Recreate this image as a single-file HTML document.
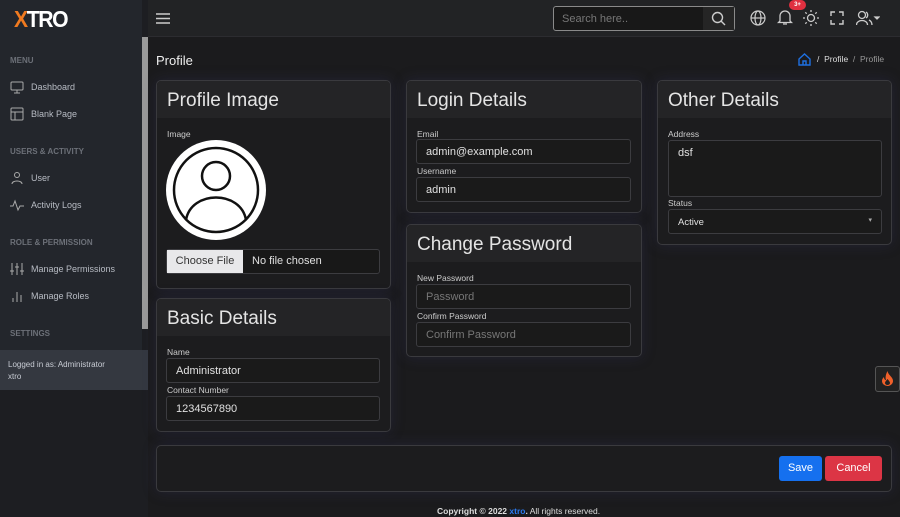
<!DOCTYPE html>
<html><head><style>
*{box-sizing:border-box;margin:0;padding:0}
body{width:900px;height:517px;overflow:hidden;background:#1b1b1d;font-family:"Liberation Sans",sans-serif;color:#ddd;position:relative}
.sb{position:absolute;left:0;top:0;width:148px;height:517px;background:#1d1e22}
.sbi{position:absolute;left:0;top:0;width:142px;height:390px;background:#23262c}
.scroll{position:absolute;left:142px;top:37px;width:6px;height:292px;background:#9a9a9a}
.logo{position:absolute;left:14px;top:6px;font-size:23px;font-weight:bold;color:#fff;letter-spacing:-1.5px;transform:scaleX(.92);transform-origin:left}
.logo b{color:#f07a20}
.sec{position:absolute;left:10px;font-size:8px;font-weight:bold;color:#6c7078}
.it{position:absolute;left:31px;font-size:9px;color:#b8bcc4}
.ic{position:absolute;left:10px;width:14px;height:14px}
.login{position:absolute;left:0;top:350px;width:148px;height:40px;background:#343840;font-size:8px;color:#c8ccd4;padding:9px 8px;line-height:12px}
.top{position:absolute;left:148px;top:0;width:752px;height:37px;background:#222325;border-bottom:1px solid #2c2c30}
.card{position:absolute;background:#1c1c1e;border:1px solid #3a3a3e;border-radius:5px;overflow:hidden;box-shadow:0 0 14px rgba(60,60,120,.25)}
.card h2{height:37px;background:#242426;font-weight:normal;font-size:19px;color:#e4e4e4;padding:9px 10px}
.lb{position:absolute;font-size:8.5px;color:#ccc}
.in{position:absolute;height:25px;border:1px solid #3c3c40;border-radius:3px;background:#1a1a1a;font-size:11px;color:#e0e0e0;padding:6px 9px}
.ph{color:#777}
.btn{position:absolute;top:456px;height:25px;border-radius:3px;color:#fff;font-size:11px;text-align:center;line-height:25px}
</style></head><body>
<div class="sb"><div class="sbi"></div><div class="scroll"></div>
<div class="logo"><b>X</b>TRO</div>
<div class="sec" style="top:56px">MENU</div>
<svg class="ic" style="top:80px" viewBox="0 0 14 14" fill="none" stroke="#aaa"><rect x="1" y="2" width="12" height="8" rx="1"/><path d="M7 10v3M4 13h6"/></svg><div class="it" style="top:82px">Dashboard</div>
<svg class="ic" style="top:107px" viewBox="0 0 14 14" fill="none" stroke="#aaa"><rect x="1" y="1" width="12" height="12" rx="1"/><path d="M1 5h12M5 5v8"/></svg><div class="it" style="top:109px">Blank Page</div>
<div class="sec" style="top:147px">USERS &amp; ACTIVITY</div>
<svg class="ic" style="top:171px" viewBox="0 0 14 14" fill="none" stroke="#aaa"><circle cx="7" cy="4" r="2.5"/><path d="M2 13c0-4 10-4 10 0"/></svg><div class="it" style="top:173px">User</div>
<svg class="ic" style="top:198px" viewBox="0 0 14 14" fill="none" stroke="#aaa"><path d="M0 8h3l2-5 3 9 2-4h4"/></svg><div class="it" style="top:200px">Activity Logs</div>
<div class="sec" style="top:238px">ROLE &amp; PERMISSION</div>
<svg class="ic" style="top:262px" viewBox="0 0 14 14" fill="none" stroke="#aaa"><path d="M2 1v12M7 1v12M12 1v12M0 9h4M5 5h4M10 9h4"/></svg><div class="it" style="top:264px">Manage Permissions</div>
<svg class="ic" style="top:289px" viewBox="0 0 14 14" fill="none" stroke="#aaa"><path d="M3 9v4M7 3v10M11 6v7"/></svg><div class="it" style="top:291px">Manage Roles</div>
<div class="sec" style="top:329px">SETTINGS</div>
<div class="login">Logged in as: Administrator<br>xtro</div>
</div>
<div class="top">
<svg style="position:absolute;left:8px;top:13px" width="14" height="11" viewBox="0 0 14 11" stroke="#ccc" stroke-width="1.4"><path d="M0 1h14M0 5.5h14M0 10h14"/></svg>
<div style="position:absolute;left:405px;top:6px;width:182px;height:25px;border:1px solid #8a8a8a;border-radius:3px;background:#181818"><span style="position:absolute;left:8px;top:6px;font-size:11px;color:#777">Search here..</span><div style="position:absolute;right:0;top:0;width:31px;height:23px;background:#252525"></div>
<svg style="position:absolute;right:8px;top:4px" width="15" height="15" viewBox="0 0 15 15" fill="none" stroke="#ccc" stroke-width="1.4"><circle cx="6.5" cy="6.5" r="5"/><path d="M10 10l4 4"/></svg></div>
<svg style="position:absolute;left:602px;top:10px" width="16" height="16" viewBox="0 0 16 16" fill="none" stroke="#ccc" stroke-width="1.2"><circle cx="8" cy="8" r="7"/><ellipse cx="8" cy="8" rx="3" ry="7"/><path d="M1 8h14"/></svg>
<svg style="position:absolute;left:629px;top:9px" width="16" height="17" viewBox="0 0 16 17" fill="none" stroke="#ccc" stroke-width="1.3"><path d="M3 12V7a5 5 0 0110 0v5l1.5 1.5h-13zM6 15h4"/></svg>
<div style="position:absolute;left:641px;top:0;width:17px;height:10px;border-radius:5px;background:#e03040;font-size:6px;color:#fff;text-align:center;line-height:10px;font-weight:bold">3+</div>
<svg style="position:absolute;left:654px;top:9px" width="18" height="18" viewBox="0 0 18 18" fill="none" stroke="#ccc" stroke-width="1.3"><circle cx="9" cy="9" r="3.5"/><path d="M9 1v2M9 15v2M1 9h2M15 9h2M3.3 3.3l1.4 1.4M13.3 13.3l1.4 1.4M3.3 14.7l1.4-1.4M13.3 4.7l1.4-1.4"/></svg>
<svg style="position:absolute;left:682px;top:11px" width="14" height="14" viewBox="0 0 14 14" fill="none" stroke="#ccc" stroke-width="1.4"><path d="M1 5V1h4M9 1h4v4M13 9v4H9M5 13H1V9"/></svg>
<svg style="position:absolute;left:708px;top:10px" width="24" height="16" viewBox="0 0 24 16" fill="none" stroke="#ccc" stroke-width="1.3"><circle cx="6" cy="5" r="3.5"/><path d="M0.5 15c0-6 11-6 11 0M10 2a3.5 3.5 0 010 6M13 10c2 1 3 3 3 5"/><path d="M19 7h4l-2 2z" fill="#ccc"/></svg>
</div>
<div style="position:absolute;left:156px;top:53px;font-size:13px;color:#eee">Profile</div>
<svg style="position:absolute;left:798px;top:53px" width="13" height="13" viewBox="0 0 13 13" fill="none" stroke="#1e6fe0" stroke-width="1.4"><path d="M1 6l5.5-5 5.5 5v6H1zM5 12V8h3v4"/></svg>
<div style="position:absolute;left:817px;top:54px;font-size:8.5px;color:#ddd">/ &nbsp;Profile &nbsp;<span style="color:#999">/ &nbsp;Profile</span></div>

<div class="card" style="left:156px;top:80px;width:235px;height:209px"><h2>Profile Image</h2></div>
<div class="lb" style="left:167px;top:129px">Image</div>
<div style="position:absolute;left:166px;top:140px;width:100px;height:100px;border-radius:50%;background:#fff"></div>
<svg style="position:absolute;left:166px;top:140px" width="100" height="100" viewBox="0 0 100 100" fill="none" stroke="#111" stroke-width="2.5"><circle cx="50" cy="50" r="42"/><circle cx="50" cy="36" r="14"/><path d="M20 80c5-30 55-30 60 0"/></svg>
<div class="in" style="left:166px;top:249px;width:214px;padding:0;background:#181818"><span style="display:inline-block;width:76px;height:23px;background:#e8e8ea;color:#333;text-align:center;line-height:23px">Choose File</span><span style="margin-left:9px">No file chosen</span></div>

<div class="card" style="left:156px;top:298px;width:235px;height:134px"><h2>Basic Details</h2></div>
<div class="lb" style="left:167px;top:347px">Name</div>
<div class="in" style="left:166px;top:358px;width:214px">Administrator</div>
<div class="lb" style="left:167px;top:385px">Contact Number</div>
<div class="in" style="left:166px;top:396px;width:214px">1234567890</div>

<div class="card" style="left:406px;top:80px;width:236px;height:133px"><h2>Login Details</h2></div>
<div class="lb" style="left:417px;top:129px">Email</div>
<div class="in" style="left:416px;top:139px;width:215px">admin@example.com</div>
<div class="lb" style="left:417px;top:166px">Username</div>
<div class="in" style="left:416px;top:177px;width:215px">admin</div>

<div class="card" style="left:406px;top:224px;width:236px;height:133px"><h2>Change Password</h2></div>
<div class="lb" style="left:417px;top:273px">New Password</div>
<div class="in ph" style="left:416px;top:284px;width:215px">Password</div>
<div class="lb" style="left:417px;top:311px">Confirm Password</div>
<div class="in ph" style="left:416px;top:322px;width:215px">Confirm Password</div>

<div class="card" style="left:657px;top:80px;width:235px;height:165px"><h2>Other Details</h2></div>
<div class="lb" style="left:668px;top:129px">Address</div>
<div class="in" style="left:668px;top:140px;width:214px;height:57px">dsf</div>
<div class="lb" style="left:668px;top:198px">Status</div>
<div class="in" style="left:668px;top:209px;width:214px;font-size:9.5px;padding-top:7px">Active<span style="position:absolute;right:9px;top:6px;font-size:7px;color:#aaa">▾</span></div>

<div style="position:absolute;left:875px;top:366px;width:25px;height:26px;border:1px solid #555;border-radius:3px;background:#222"></div>
<svg style="position:absolute;left:881px;top:371px" width="13" height="15" viewBox="0 0 13 15"><path d="M6.5 0C7 4 12 6 12 10a5.5 5 0 01-11 0c0-2 1-3 2-4 0 2 1 3 2 3C4 6 5 3 6.5 0z" fill="#f0602a"/><path d="M6.5 8c1 1.5 2.5 2.5 2.5 4a2.5 2 0 01-5 0c0-1.5 1.5-2.5 2.5-4z" fill="#222"/></svg>

<div class="card" style="left:156px;top:445px;width:736px;height:47px"></div>
<div class="btn" style="left:779px;width:43px;background:#1570ef">Save</div>
<div class="btn" style="left:825px;width:57px;background:#dc3545">Cancel</div>
<div style="position:absolute;left:437px;top:506px;font-size:8.5px;color:#ddd"><b>Copyright © 2022 <span style="color:#2a7af0">xtro</span>.</b> All rights reserved.</div>
</body></html>
